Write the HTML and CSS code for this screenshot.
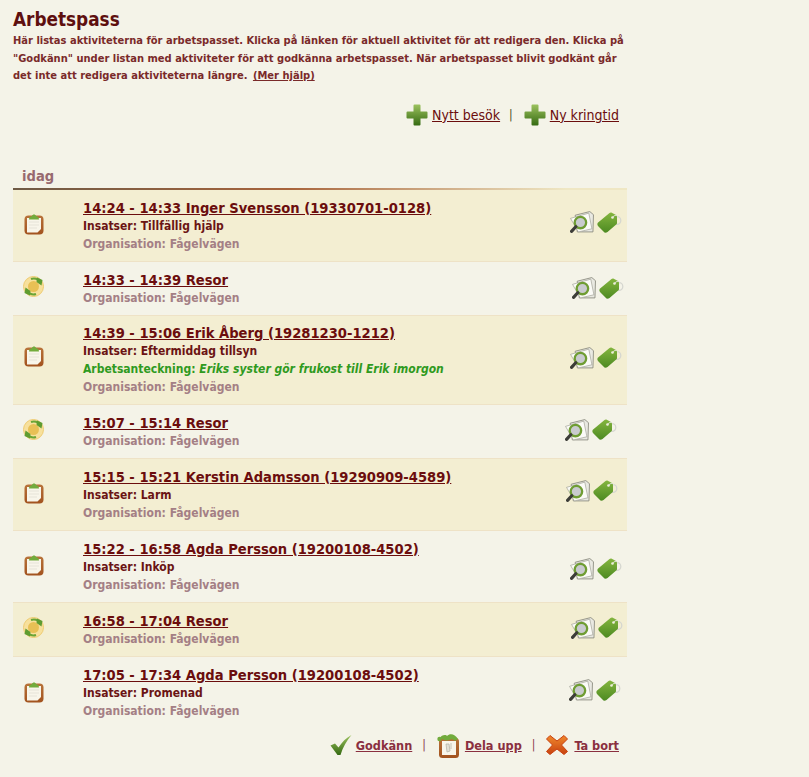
FILE: index.html
```html
<!DOCTYPE html>
<html lang="sv">
<head>
    <meta charset="UTF-8">
    <title>Arbetspass</title>
    <link rel="stylesheet" href="styles.css">
</head>
<body>
    <svg class="defs" width="0" height="0">
        <defs>
            <linearGradient id="g-green" x1="0" y1="0" x2="0" y2="1"><stop offset="0" stop-color="#84b53e"/><stop offset="1" stop-color="#4d8a22"/></linearGradient>
            <linearGradient id="g-plus" x1="0" y1="0" x2="0" y2="1"><stop offset="0" stop-color="#9cc25e"/><stop offset="1" stop-color="#356a12"/></linearGradient>
            <linearGradient id="g-wood" x1="0" y1="0" x2="0" y2="1"><stop offset="0" stop-color="#b8733a"/><stop offset="1" stop-color="#a2521e"/></linearGradient>
            <linearGradient id="g-x" x1="0" y1="0" x2="0" y2="1"><stop offset="0" stop-color="#f0892c"/><stop offset="1" stop-color="#c8410f"/></linearGradient>
            <symbol id="i-clip" viewBox="0 0 20 22">
                <rect x=".5" y="2.500" width="19" height="19" rx="4" fill="url(#g-wood)"/>
                <path d="M3 5h14v11l-3.500 3.500H3z" fill="#f8f5ea"/>
                <path d="M5 9h10M5 12h10M5 15h8" stroke="#e6e3d8" stroke-width="1"/>
                <path d="M5 6.500c0-2.500 1.500-3 3-3.500.4-2 3.600-2 4 0 1.500.5 3 1 3 3.500z" fill="#72ab3c"/>
            </symbol>
            <symbol id="i-cycle" viewBox="0 0 21 21">
                <circle cx="10.500" cy="10.500" r="10" fill="#f7e09c" stroke="#eecb70" stroke-width="1"/>
                <circle cx="10.500" cy="10.500" r="5.500" fill="#e8c055"/>
                <path d="M8 3A8 8 0 0 1 15 3.800" fill="none" stroke="#6aa536" stroke-width="2"/>
                <path d="M14 1.500L19.500 4 18.500 9.500 13.500 6z" fill="#5f9c30"/>
                <path d="M13 18A8 8 0 0 1 6 17.200" fill="none" stroke="#6aa536" stroke-width="2"/>
                <path d="M7 19.500L1.500 17 2.500 11.500 7.500 15z" fill="#5f9c30"/>
            </symbol>
            <symbol id="i-view" viewBox="0 0 23 21">
                <path d="M5 4L19 .5l3.500 3L22 20H7z" fill="#e9e9e2" stroke="#85857a" stroke-width=".8"/>
                <path d="M.5 7L18 2l3 15-13 3z" fill="#fbfbf7" stroke="#9a9a8e" stroke-width=".6"/>
                <circle cx="10" cy="11" r="5.500" fill="#c9cbce" stroke="#6f9d33" stroke-width="2.200"/>
                <path d="M5.500 15L1.500 19.500" stroke="#3d3d38" stroke-width="3" stroke-linecap="round"/>
            </symbol>
            <symbol id="i-tag" viewBox="0 0 25 21">
                <circle cx="20" cy="8.500" r="3.800" fill="none" stroke="#d6d7d0" stroke-width="1.300"/>
                <path d="M.8 10.800L12.500 1q.8-.6 1.800-.4L19 3q1 .5 1 1.500V11q0 .7-.5 1.200L10.500 20q-1.500 1-3 .5L1 14q-1.200-1.600-.2-3.200z" fill="url(#g-green)"/>
                <circle cx="15.500" cy="5.500" r="1.300" fill="#f3f1e0"/>
                <path d="M15.500 5.500c2-3 5-2.500 5.500 0" fill="none" stroke="#e6e7df" stroke-width="1"/>
            </symbol>
            <symbol id="i-plus" viewBox="0 0 22 22">
                <path d="M7.500 1.500q0-1 1-1h5q1 0 1 1V7.500h6q1 0 1 1v5q0 1-1 1h-6v6q0 1-1 1h-5q-1 0-1-1v-6h-6q-1 0-1-1v-5q0-1 1-1h6z" fill="url(#g-plus)"/>
            </symbol>
            <symbol id="i-check" viewBox="0 0 22 22">
                <path d="M.5 11.500l4.500-2 3.500 4C12 8 16 4 21.500 1c-5 6-8.500 12-11 20H7.500z" fill="url(#g-plus)"/>
            </symbol>
            <symbol id="i-split" viewBox="0 0 22 25">
                <rect x="2" y="5" width="20" height="20" rx="3.500" fill="url(#g-wood)"/>
                <path d="M5 8h14v14H5z" fill="#f8f5ea"/>
                <path d="M9 11l1 8 3-1-1-7zM14 10v6" fill="#e2e0d4" stroke="#b8b6aa" stroke-width=".8"/>
                <path d="M3 5c1-3 6-4 7-2 3-3 8-2 11 3l-3 2c-2-2-4-2-6-1-2 1-6 0-9-2z" fill="#72ab3c"/>
                <circle cx="2.500" cy="6" r="2.200" fill="#72ab3c"/>
            </symbol>
            <symbol id="i-x" viewBox="0 0 22 22">
                <path d="M4 1.500l7 5.500 7-5.500 3.500 3.500-6 6 6 6.500-3.500 3-7-5.500-7 5.500-3.500-3 6-6.500-6-6z" fill="url(#g-x)" stroke="#c8410f" stroke-width="1" stroke-linejoin="round"/>
            </symbol>
        </defs>
    </svg>

    <div class="page">
        <h1>Arbetspass</h1>
        <p class="intro">Här listas aktiviteterna för arbetspasset. Klicka på länken för aktuell aktivitet för att redigera den. Klicka på "Godkänn" under listan med aktiviteter för att godkänna arbetspasset. När arbetspasset blivit godkänt går det inte att redigera aktiviteterna längre. <a href="#">(Mer hjälp)</a></p>

        <div class="toolbar top">
            <svg class="tool-icon"><use href="#i-plus"/></svg><a href="#">Nytt besök</a>
            <span class="sep">|</span>
            <svg class="tool-icon"><use href="#i-plus"/></svg><a href="#">Ny kringtid</a>
        </div>

        <h2>idag</h2>
        <ul class="list">
            <li class="row tall shaded">
                <svg class="kind"><use href="#i-clip"/></svg>
                <div class="info">
                    <a class="title" href="#">14:24 - 14:33 Inger Svensson (19330701-0128)</a>
                    <div><b>Insatser:</b> Tillfällig hjälp</div>
                    <div class="org">Organisation: Fågelvägen</div>
                </div>
                <div class="acts a1"><svg class="view"><use href="#i-view"/></svg><svg class="tag"><use href="#i-tag"/></svg></div>
            </li>
            <li class="row short">
                <svg class="kind round"><use href="#i-cycle"/></svg>
                <div class="info">
                    <a class="title" href="#">14:33 - 14:39 Resor</a>
                    <div class="org">Organisation: Fågelvägen</div>
                </div>
                <div class="acts a2"><svg class="view"><use href="#i-view"/></svg><svg class="tag"><use href="#i-tag"/></svg></div>
            </li>
            <li class="row shaded">
                <svg class="kind high"><use href="#i-clip"/></svg>
                <div class="info">
                    <a class="title" href="#">14:39 - 15:06 Erik Åberg (19281230-1212)</a>
                    <div><b>Insatser:</b> Eftermiddag tillsyn</div>
                    <div class="note"><b>Arbetsanteckning:</b> <i>Eriks syster gör frukost till Erik imorgon</i></div>
                    <div class="org">Organisation: Fågelvägen</div>
                </div>
                <div class="acts a3"><svg class="view"><use href="#i-view"/></svg><svg class="tag"><use href="#i-tag"/></svg></div>
            </li>
            <li class="row short">
                <svg class="kind round"><use href="#i-cycle"/></svg>
                <div class="info">
                    <a class="title" href="#">15:07 - 15:14 Resor</a>
                    <div class="org">Organisation: Fågelvägen</div>
                </div>
                <div class="acts a4"><svg class="view"><use href="#i-view"/></svg><svg class="tag"><use href="#i-tag"/></svg></div>
            </li>
            <li class="row tall shaded">
                <svg class="kind"><use href="#i-clip"/></svg>
                <div class="info">
                    <a class="title" href="#">15:15 - 15:21 Kerstin Adamsson (19290909-4589)</a>
                    <div><b>Insatser:</b> Larm</div>
                    <div class="org">Organisation: Fågelvägen</div>
                </div>
                <div class="acts a5"><svg class="view"><use href="#i-view"/></svg><svg class="tag"><use href="#i-tag"/></svg></div>
            </li>
            <li class="row tall">
                <svg class="kind"><use href="#i-clip"/></svg>
                <div class="info">
                    <a class="title" href="#">15:22 - 16:58 Agda Persson (19200108-4502)</a>
                    <div><b>Insatser:</b> Inköp</div>
                    <div class="org">Organisation: Fågelvägen</div>
                </div>
                <div class="acts a6"><svg class="view"><use href="#i-view"/></svg><svg class="tag"><use href="#i-tag"/></svg></div>
            </li>
            <li class="row short shaded">
                <svg class="kind round"><use href="#i-cycle"/></svg>
                <div class="info">
                    <a class="title" href="#">16:58 - 17:04 Resor</a>
                    <div class="org">Organisation: Fågelvägen</div>
                </div>
                <div class="acts a7"><svg class="view"><use href="#i-view"/></svg><svg class="tag"><use href="#i-tag"/></svg></div>
            </li>
            <li class="row tall last">
                <svg class="kind"><use href="#i-clip"/></svg>
                <div class="info">
                    <a class="title" href="#">17:05 - 17:34 Agda Persson (19200108-4502)</a>
                    <div><b>Insatser:</b> Promenad</div>
                    <div class="org">Organisation: Fågelvägen</div>
                </div>
                <div class="acts a8"><svg class="view"><use href="#i-view"/></svg><svg class="tag"><use href="#i-tag"/></svg></div>
            </li>
        </ul>

        <div class="toolbar bottom">
            <svg class="tool-icon"><use href="#i-check"/></svg><a href="#">Godkänn</a>
            <span class="sep">|</span>
            <svg class="tool-icon split"><use href="#i-split"/></svg><a href="#">Dela upp</a>
            <span class="sep">|</span>
            <svg class="tool-icon"><use href="#i-x"/></svg><a href="#">Ta bort</a>
        </div>
    </div>
</body>
</html>
```

FILE: styles.css
```css
html, body {
    margin: 0;
    padding: 0;
}

body {
    background-color: #f4f3e8;
    color: #6b1414;
    font-family: "DejaVu Sans Condensed", "DejaVu Sans", Verdana, sans-serif;
    font-stretch: condensed;
    font-size: 12px;
    overflow: hidden;
}

.defs {
    position: absolute;
}

.page {
    width: 614px;
    margin-left: 13px;
    padding-top: 8px;
}

h1 {
    margin: 0;
    font-size: 18.8px;
    line-height: 23px;
    font-weight: bold;
    color: #5e0f0f;
}

.intro {
    margin: 1px 0 0;
    width: 614px;
    line-height: 17.6px;
    font-weight: bold;
    font-size: 11.05px;
    color: #7a2a2a;
}

.intro a {
    margin-left: 2px;
    color: #7a2a2a;
}

.toolbar {
    display: flex;
    justify-content: flex-end;
    align-items: center;
    padding-right: 8px;
    font-size: 14px;
}

.toolbar a {
    color: #6b0d0d;
}

.top {
    height: 24px;
    margin-top: 18px;
}

.top .sep {
    margin: 0 11px 0 9px;
    color: #4a4a20;
    font-size: 12px;
}

.tool-icon {
    width: 22px;
    height: 22px;
    margin-right: 4px;
    flex: none;
}

.tool-icon.split {
    height: 25px;
}

h2 {
    margin: 41.4px 0 0;
    padding-left: 9px;
    height: 22px;
    font-size: 14.6px;
    line-height: 15px;
    color: #97696f;
    background: linear-gradient(to right, #6e5a45, #a8643c 45%, #efe7c4 90%) left bottom / 100% 2px no-repeat;
}

.list {
    list-style: none;
    margin: 0;
    padding: 0;
}

.row {
    display: flex;
    align-items: center;
    height: 89px;
    border-bottom: 1px solid #eee2c6;
    box-sizing: border-box;
}

.tall {
    height: 72px;
}

.short {
    height: 54px;
}

.last {
    border-bottom: 0;
}

.shaded {
    background-color: #f3eed2;
}

.kind {
    width: 20px;
    height: 22px;
    margin-left: 11px;
    margin-bottom: 3px;
    flex: none;
}

.kind.round {
    width: 21px;
    height: 21px;
    margin-left: 10px;
    margin-bottom: 5px;
}

.kind.high {
    margin-bottom: 8px;
}

.info {
    flex: 1;
    margin-left: 39px;
    line-height: 18px;
    font-weight: bold;
    font-size: 12px;
}

.info .title {
    display: block;
    width: fit-content;
    font-size: 14.6px;
    line-height: 18px;
    color: #6b0d0d;
}

.note {
    color: #2f9a1e;
}

.org {
    color: #a47f85;
}

.acts {
    display: flex;
    align-items: center;
    flex: none;
    gap: 3px;
}

.view {
    width: 24px;
    height: 22px;
}

.tag {
    width: 25px;
    height: 21px;
}

.a1 { margin-right: 5px; margin-bottom: 7px; }
.a2 { margin-right: 3px; margin-bottom: 1px; }
.a3 { margin-right: 5px; margin-bottom: 5px; }
.a4 { margin-right: 10px; margin-bottom: 4px; }
.a5 { margin-right: 9px; margin-bottom: 8px; }
.a6 { margin-right: 5px; margin-top: 4px; }
.a7 { margin-right: 4px; margin-bottom: 4px; }
.a8 { margin-right: 6px; margin-bottom: 6px; }

.bottom {
    height: 30px;
    margin-top: 1px;
}

.bottom .tool-icon {
    margin-right: 6px;
}

.bottom .tool-icon:first-child {
    margin-right: 4px;
}

.bottom a {
    color: #8a2f3f;
    font-weight: bold;
    font-size: 12.6px;
}

.bottom .sep {
    margin: 0 11px 0 10px;
    color: #8a3a4a;
    font-size: 12px;
}
```
